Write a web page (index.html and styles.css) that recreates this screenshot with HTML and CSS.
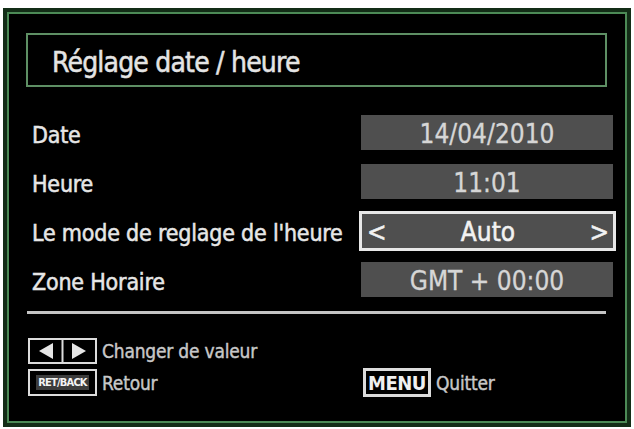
FILE: index.html
```html
<!DOCTYPE html>
<html lang="fr">
<head>
<meta charset="utf-8">
<title>Réglage date / heure</title>
<link rel="stylesheet" href="styles.css">
</head>
<body>
<div class="screen">
  <div class="inner">
    <div class="title">Réglage date / heure</div>
    <div class="rows">
      <div class="row"><span class="label">Date</span><span class="value">14/04/2010</span></div>
      <div class="row"><span class="label">Heure</span><span class="value">11:01</span></div>
      <div class="row"><span class="label">Le mode de reglage de l'heure</span>
        <span class="value selected"><span class="chev">&lt;</span><span>Auto</span><span class="chev">&gt;</span></span></div>
      <div class="row"><span class="label">Zone Horaire</span><span class="value">GMT + 00:00</span></div>
    </div>
    <div class="sep"></div>
    <div class="footer">
      <div class="hint">
        <span class="key arrows">
          <svg width="69" height="26" viewBox="0 0 69 26">
            <rect x="1" y="1" width="67" height="24" fill="#000" stroke="#dcdcdc" stroke-width="2"/>
            <line x1="34.5" y1="1" x2="34.5" y2="25" stroke="#dcdcdc" stroke-width="2"/>
            <polygon points="25,5 25,21 11,13" fill="#e6e6e6"/>
            <polygon points="44,5 44,21 58,13" fill="#e6e6e6"/>
          </svg>
        </span>
        <span class="htext">Changer de valeur</span>
      </div>
      <div></div>
      <div class="hint">
        <span class="key retback"><span class="retin">RET/BACK</span></span>
        <span class="htext">Retour</span>
      </div>
      <div class="hint">
        <span class="key menu">MENU</span>
        <span class="htext">Quitter</span>
      </div>
    </div>
  </div>
</div>
</body>
</html>
```
FILE: styles.css
```css
html, body {
  margin: 0;
  padding: 0;
  background: #ffffff;
}
body {
  font-family: "DejaVu Sans Condensed", "DejaVu Sans", sans-serif;
}
.screen {
  box-sizing: border-box;
  width: 628px;
  height: 419px;
  margin: 8px 0 0 3px;
  border: 4px solid #132d17;
  background: #000;
}
.inner {
  box-sizing: border-box;
  height: 100%;
  border: 2px solid #4c8a56;
  padding: 19px 12px 0 17px;
}
.title {
  box-sizing: border-box;
  width: 581px;
  height: 54px;
  border: 2px solid #5e8f64;
  color: #e4e4e4;
  font-size: 28px;
  line-height: 48px;
  padding: 4px 0 0 24px;
  letter-spacing: -0.8px;
  -webkit-text-stroke: 0.5px #e4e4e4;
}
.rows {
  margin-top: 21px;
}
.row {
  height: 49px;
  display: flex;
  align-items: center;
  justify-content: space-between;
  padding-left: 6px;
}
.label {
  color: #e6e6e6;
  font-size: 23px;
  padding-top: 4px;
  letter-spacing: -0.2px;
  -webkit-text-stroke: 0.5px #e6e6e6;
}
.value {
  box-sizing: border-box;
  width: 252px;
  height: 35px;
  background: #4f4f4f;
  color: #d6d6d6;
  font-size: 26px;
  line-height: 35px;
  padding-top: 2px;
  text-align: center;
  -webkit-text-stroke: 0.3px #d6d6d6;
}
.value.selected {
  width: 257px;
  height: 40px;
  margin-right: -3px;
  border: 3px solid #e8e8e8;
  line-height: 34px;
  color: #f2f2f2;
  -webkit-text-stroke: 0.5px #f2f2f2;
  display: flex;
  justify-content: space-between;
  padding: 1px 4px 0 5px;
}
.chev {
  font-size: 26px;
}
.sep {
  width: 579px;
  height: 3px;
  margin: 7px 0 0 1px;
  background: #c4c4c4;
}
.footer {
  margin-top: 24px;
  margin-left: 2px;
  display: grid;
  grid-template-columns: 335px auto;
  row-gap: 4px;
}
.hint {
  display: flex;
  align-items: center;
  gap: 5px;
}
.htext {
  color: #c8c8c8;
  font-size: 19px;
  letter-spacing: -0.2px;
  -webkit-text-stroke: 0.4px #c8c8c8;
}
.key {
  box-sizing: border-box;
  display: flex;
  align-items: center;
  justify-content: center;
}
.arrows svg {
  display: block;
}
.retback {
  width: 69px;
  height: 27px;
  border: 2px solid #dcdcdc;
}
.retin {
  background: #3c3c3c;
  color: #f4f4f4;
  font-weight: bold;
  font-size: 11px;
  line-height: 15px;
  padding: 0 2px;
  letter-spacing: -0.8px;
}
.menu {
  width: 68px;
  height: 29px;
  border: 3px solid #dcdcdc;
  color: #f0f0f0;
  font-weight: bold;
  font-size: 20px;
  letter-spacing: -0.5px;
}
```
